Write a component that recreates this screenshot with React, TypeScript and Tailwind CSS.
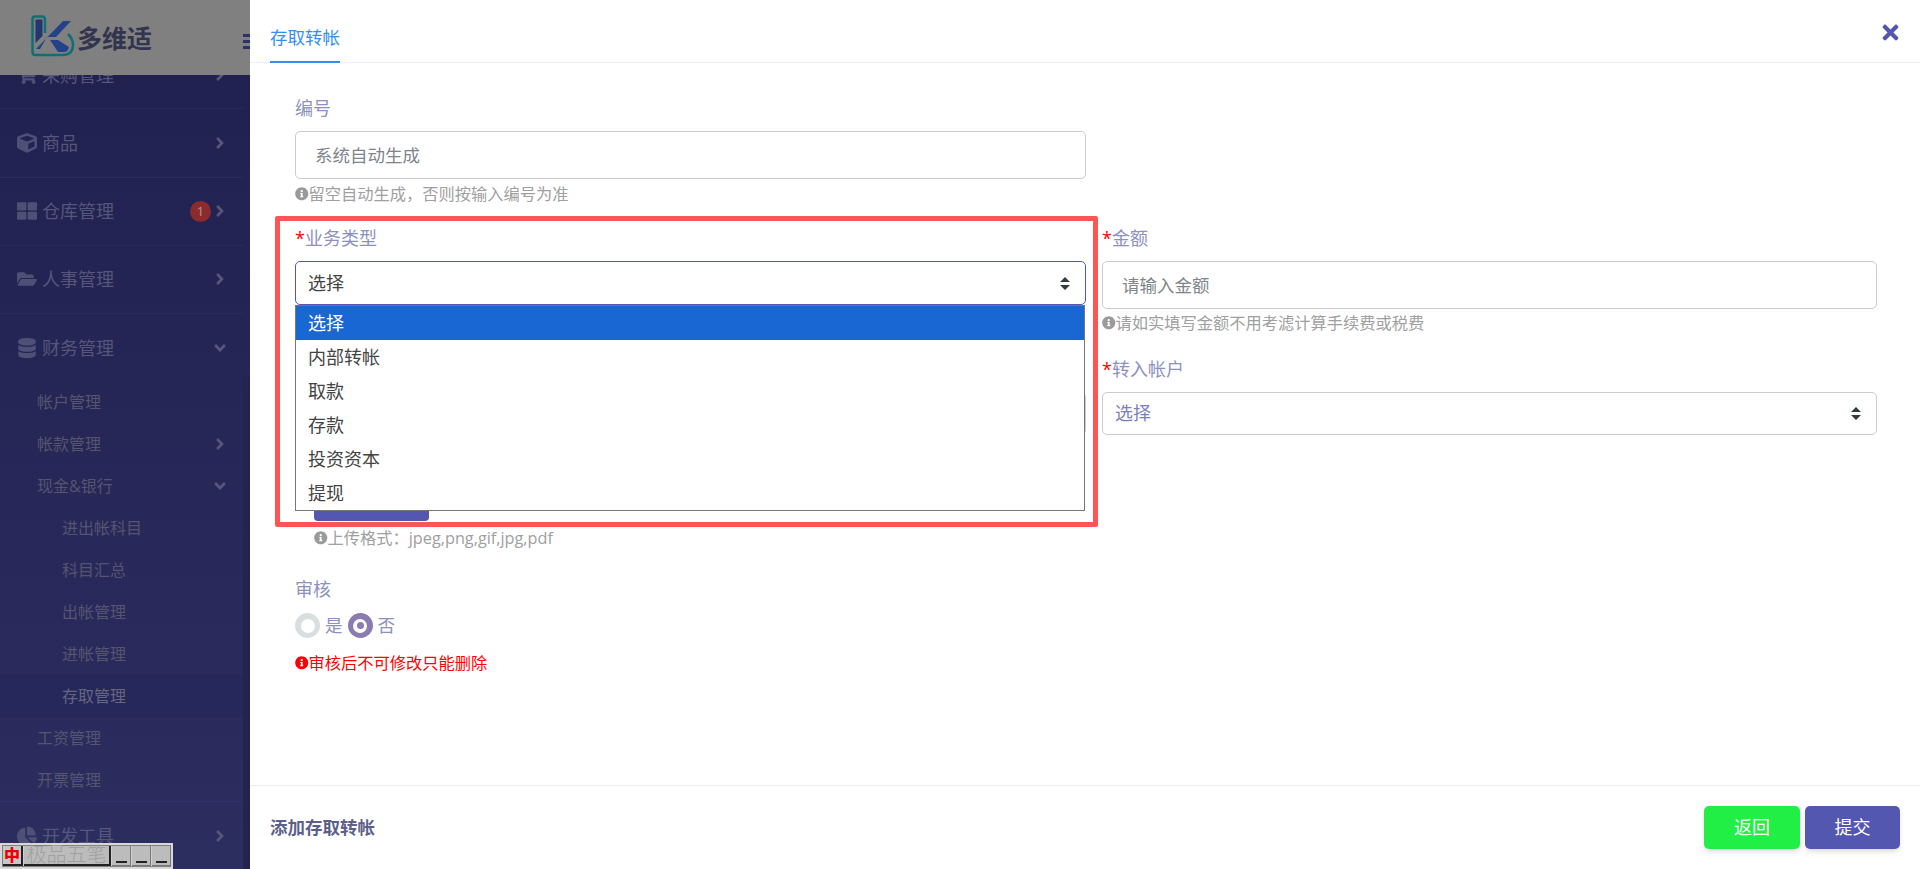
import { ReactNode } from "react";
import {
  FaAngleDown,
  FaAngleRight,
  FaChartPie,
  FaCube,
  FaDatabase,
  FaFolderOpen,
  FaInfoCircle,
  FaShoppingCart,
  FaThLarge,
  FaTimes,
} from "react-icons/fa";

const font = "font-['Open_Sans','Noto_Sans_CJK_SC',sans-serif]";

function Logo() {
  return (
    <svg width="44" height="42" viewBox="0 0 44 42" className="shrink-0">
      <path
        d="M4 1.5 H11 Q14 1.5 14 4.5 V18 M4 1.5 Q1.5 1.5 1.5 4.5 V37 Q1.5 40 4.5 40 H31 Q42 40 42 30 Q42 24 37 19"
        fill="none"
        stroke="#0f6f73"
        strokeWidth="2.5"
      />
      <path d="M4.5 4.5 H11.5 V21 L4.5 28 Z" fill="#24356f" />
      <path d="M5 34 L32 6 H40 L25 22 H16 L9 34 Z" fill="#24428a" />
      <path d="M19 25 H27 L38 32 Q37 37 33 37 H27 Z" fill="#24428a" />
    </svg>
  );
}

function MenuItem({
  icon,
  label,
  open,
  badge,
  last,
}: {
  icon: ReactNode;
  label: string;
  open?: boolean;
  badge?: string;
  last?: boolean;
}) {
  return (
    <div
      className={`flex h-[68.25px] w-[243px] shrink-0 items-center pl-[17px] pr-[14px] text-[18px] leading-[24px] text-[#55567a] ${
        last ? "" : "border-b border-[#2a2b5a]"
      }`}
    >
      <span className="flex w-[25px] justify-start text-[20px] text-[#4f5076]">{icon}</span>
      <span className="flex-1">{label}</span>
      {badge && (
        <span className="flex h-[21px] w-[21px] items-center justify-center rounded-full bg-[#8c2b2c] text-[13px] text-[#a89a98]">
          {badge}
        </span>
      )}
      {open ? (
        <FaAngleDown className="text-[18px] text-[#55567a]" />
      ) : (
        <FaAngleRight className="text-[18px] text-[#55567a]" />
      )}
    </div>
  );
}

function SubItem({
  label,
  depth = 1,
  arrow,
  active,
}: {
  label: string;
  depth?: 1 | 2;
  arrow?: "right" | "down";
  active?: boolean;
}) {
  return (
    <div
      className={`flex h-[42px] w-[243px] shrink-0 items-center pr-[14px] text-[16px] leading-[24px] ${
        depth === 1 ? "pl-[37px]" : "pl-[62px]"
      } ${active ? "bg-[#26275a] text-[#66667f]" : "text-[#54556f]"}`}
    >
      <span className="flex-1">{label}</span>
      {arrow === "right" && <FaAngleRight className="text-[18px] text-[#55567a]" />}
      {arrow === "down" && <FaAngleDown className="text-[18px] text-[#55567a]" />}
    </div>
  );
}

function Sidebar() {
  return (
    <aside className="relative flex h-full w-[250px] shrink-0 flex-col overflow-hidden bg-gradient-to-b from-[#1f204e] to-[#2d2e60]">
      <div className="z-10 flex h-[75px] w-full shrink-0 items-center bg-[#808080] pl-[31px] pb-[3px]">
        <Logo />
        <span className="ml-[2px] mt-[3px] text-[25px] font-bold leading-[30px] text-[#33344f]">多维适</span>
        <div className="ml-auto mt-[10px] flex w-[7px] shrink-0 flex-col gap-[3px]">
          <span className="h-[3px] w-full bg-[#2e3068]" />
          <span className="h-[3px] w-full bg-[#2e3068]" />
          <span className="h-[3px] w-full bg-[#2e3068]" />
        </div>
      </div>
      <nav className="relative flex flex-1 flex-col overflow-hidden">
        <div className="-mt-[34px]">
          <MenuItem icon={<FaShoppingCart />} label="采购管理" />
        </div>
        <MenuItem icon={<FaCube />} label="商品" />
        <MenuItem icon={<FaThLarge />} label="仓库管理" badge="1" />
        <MenuItem icon={<FaFolderOpen />} label="人事管理" />
        <MenuItem icon={<FaDatabase />} label="财务管理" open last />
        <div className="-mt-[1px]">
          <SubItem label="帐户管理" />
        </div>
        <SubItem label="帐款管理" arrow="right" />
        <SubItem label="现金&银行" arrow="down" />
        <SubItem label="进出帐科目" depth={2} />
        <SubItem label="科目汇总" depth={2} />
        <SubItem label="出帐管理" depth={2} />
        <SubItem label="进帐管理" depth={2} />
        <SubItem label="存取管理" depth={2} active />
        <SubItem label="工资管理" />
        <SubItem label="开票管理" />
        <div className="h-[1px] w-[243px] shrink-0 bg-[#30316a]" />
        <MenuItem icon={<FaChartPie />} label="开发工具" last />
        <div className="absolute right-0 top-[300px] bottom-0 w-[7px] rounded-t-md bg-[#24254f]" />
      </nav>
    </aside>
  );
}

function Label({ text, required }: { text: string; required?: boolean }) {
  return (
    <label className="block text-[18px] leading-[27px] text-[#8d91c0]">
      {required && <span className="text-[#ff0000]">*</span>}
      {text}
    </label>
  );
}

function Hint({ text, className = "" }: { text: string; className?: string }) {
  return (
    <p className={`flex items-center text-[16.25px] leading-[24px] text-[#a0a0a0] ${className}`}>
      <FaInfoCircle className="shrink-0 text-[13.5px] text-[#9a9a9a]" />
      {text}
    </p>
  );
}

function TextInput({ text }: { text: string }) {
  return (
    <div className="flex h-[48px] items-center rounded-[5px] border border-[#cbcbcb] bg-white pl-[19px] text-[17.5px] text-[#80858c]">
      {text}
    </div>
  );
}

function UpDown({ color }: { color: string }) {
  return (
    <svg width="10" height="13" viewBox="0 0 10 13" className="shrink-0">
      <path d="M5 0 L10 5 H0 Z M0 8 H10 L5 13 Z" fill={color} />
    </svg>
  );
}

function Radio({ checked }: { checked?: boolean }) {
  if (checked) {
    return (
      <span className="flex h-[25px] w-[25px] items-center justify-center rounded-full bg-[#8a7cb0]">
        <span className="flex h-[14px] w-[14px] items-center justify-center rounded-full bg-white">
          <span className="h-[7px] w-[7px] rounded-full bg-[#8a7cb0]" />
        </span>
      </span>
    );
  }
  return (
    <span className="flex h-[25px] w-[25px] items-center justify-center rounded-full bg-[#d9dfe0]">
      <span className="h-[14px] w-[14px] rounded-full bg-white" />
    </span>
  );
}

const options = ["选择", "内部转帐", "取款", "存款", "投资资本", "提现"];

function TypeSelect() {
  return (
    <div className="relative mt-[9px]">
      <div className="flex h-[44px] items-center justify-between rounded-[5px] border border-[#5457b0] bg-white pl-[12px] pr-[15px] text-[18px] text-[#444444]">
        选择
        <UpDown color="#343a40" />
      </div>
      <ul className="absolute left-0 top-full z-20 h-[206px] w-[790px] border border-[#767676] bg-white text-[18px] text-[#444444]">
        {options.map((o, i) => (
          <li
            key={o}
            className={`flex h-[34px] items-center pl-[12px] ${i === 0 ? "bg-[#1967d2] text-white" : ""}`}
          >
            {o}
          </li>
        ))}
      </ul>
    </div>
  );
}

function Panel() {
  return (
    <main className="relative flex h-full flex-1 flex-col bg-white">
      <div className="flex h-[63px] shrink-0 items-end justify-between border-b border-[#eeeeff] pl-[20px] pr-[18px]">
        <span className="-mb-px border-b-2 border-[#3390f0] pb-[11px] text-[17.5px] leading-[25px] text-[#3390f0]">
          存取转帐
        </span>
        <FaTimes className="mb-[18px] text-[23px] text-[#5457b0]" />
      </div>

      <div className="grid flex-1 grid-cols-[791px_775px] gap-x-[16px] pl-[45px] pt-[32px]">
        <div>
          <Label text="编号" />
          <div className="mt-[9px]">
            <TextInput text="系统自动生成" />
          </div>
          <Hint text="留空自动生成，否则按输入编号为准" className="mt-[3px]" />
          <div className="mt-[19px]">
            <Label text="业务类型" required />
            <TypeSelect />
          </div>
          <div className="mt-[87px] h-[43px] rounded-[5px] border border-[#cbcbcb]" />
          <div className="ml-[19px] mt-[43px] h-[43px] w-[115px] rounded-[4px] bg-[#5457b0]" />
          <Hint text="上传格式：jpeg,png,gif,jpg,pdf" className="ml-[19px] mt-[5px]" />
          <div className="mt-[26px]">
            <Label text="审核" />
            <div className="mt-[10px] flex items-center text-[17.5px] leading-[25px] text-[#8d91c0]">
              <Radio />
              <span className="ml-[5px] mr-[5px]">是</span>
              <Radio checked />
              <span className="ml-[5px]">否</span>
            </div>
          </div>
          <p className="mt-[13px] flex items-center text-[16.25px] leading-[24px] text-[#ff0000]">
            <FaInfoCircle className="shrink-0 text-[13.5px]" />
            审核后不可修改只能删除
          </p>
        </div>

        <div className="pt-[130px]">
          <Label text="金额" required />
          <div className="mt-[9px]">
            <TextInput text="请输入金额" />
          </div>
          <Hint text="请如实填写金额不用考滤计算手续费或税费" className="mt-[2px]" />
          <div className="mt-[21px]">
            <Label text="转入帐户" required />
            <div className="mt-[9px] flex h-[43px] items-center justify-between rounded-[5px] border border-[#cbcbcb] pl-[12px] pr-[15px] text-[18px] text-[#7b80bf]">
              选择
              <UpDown color="#343a40" />
            </div>
          </div>
        </div>
      </div>

      <div className="flex h-[84px] shrink-0 items-center justify-between border-t border-[#ececf4] pl-[20px] pr-[20px]">
        <span className="text-[17.5px] font-bold text-[#5c5f8a]">添加存取转帐</span>
        <div className="flex gap-[5px]">
          <button className="h-[43px] w-[96px] rounded-[5px] bg-[#22ef45] text-[18px] text-white shadow-md">
            返回
          </button>
          <button className="h-[43px] w-[95px] rounded-[5px] bg-[#5457b0] text-[18px] text-white shadow-md">
            提交
          </button>
        </div>
      </div>

      <div className="pointer-events-none absolute left-[25px] top-[216px] z-30 h-[311px] w-[823px] rounded-[2px] border-[5px] border-[#ff5555]" />
    </main>
  );
}

function ImeBar() {
  return (
    <div className="absolute bottom-0 left-0 z-40 flex h-[26px] w-[173px] items-center gap-[1px] border-2 border-[#d8d8d8] bg-[#d0d0d0] pl-[1px] shadow-[inset_0_0_0_1px_#808080]">
      <span className="flex h-[20px] w-[20px] items-center justify-center border-r-2 border-b-2 border-[#222] bg-[#c8c8c8] text-[16px] font-black leading-none text-[#ee0000]">
        中
      </span>
      <span className="flex h-[20px] w-[87px] items-center justify-center border-r-2 border-b-2 border-[#222] bg-[#bcbcbc] text-[20px] font-light leading-none text-[#a0a0a0]">
        极品五笔
      </span>
      {[0, 1, 2].map((k) => (
        <span key={k} className="flex h-[20px] w-[19px] items-end justify-center border-r border-b border-[#777] bg-[#bcbcbc] pb-[2px]">
          <span className="h-[2px] w-[11px] bg-[#222]" />
        </span>
      ))}
    </div>
  );
}

export default function App() {
  return (
    <div className={`relative flex h-[869px] w-[1920px] overflow-hidden ${font}`}>
      <Sidebar />
      <Panel />
      <ImeBar />
    </div>
  );
}
